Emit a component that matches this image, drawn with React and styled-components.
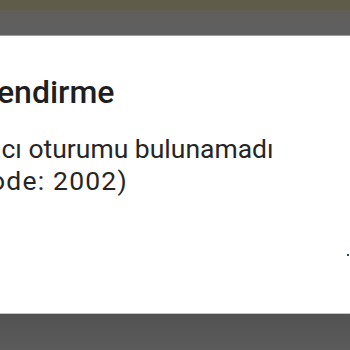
import React from "react"
import styled, { createGlobalStyle } from "styled-components"

const GlobalStyle = createGlobalStyle`
    html, body {
        margin: 0;
        padding: 0;
        background: #5f5f5f;
    }
    body {
        font-family: Roboto, "Noto Sans", sans-serif;
    }
`

const Screen = styled.div`
    display: flex;
    flex-direction: column;
    width: 350px;
    height: 350px;
    overflow: hidden;
`

const StatusBar = styled.div`
    height: 10px;
    background: #5f5d4a;
    flex-shrink: 0;
`

const Scrim = styled.div`
    height: 26px;
    background: linear-gradient(#5f5e57 0%, #5f5f5f 40%);
    flex-shrink: 0;
`

const Dialog = styled.div`
    position: relative;
    height: 277px;
    flex-shrink: 0;
    background: #ffffff;
    box-shadow: 0 -1px 0 #9a9a9a;
    margin-left: ${(p) => p.shift}px;
    padding: 36px 24px 0 0;
    box-sizing: border-box;
    display: flex;
    flex-direction: column;
    gap: 21px;
`

const Title = styled.h2`
    margin: 0 0 0 ${(p) => p.indent || 0}px;
    font: 500 32px/40px Roboto, sans-serif;
    color: #1f1f1f;
    white-space: nowrap;
`

const Message = styled.div`
    display: flex;
    flex-direction: column;
    font: 400 26.5px/32px Roboto, sans-serif;
    color: #262626;
`

const MessageLine = styled.span`
    margin-left: ${(p) => p.indent || 0}px;
    letter-spacing: ${(p) => p.spread || 0}px;
    white-space: nowrap;
`

const Dot = styled.span`
    position: absolute;
    right: ${(p) => p.right}px;
    top: ${(p) => p.top}px;
    width: 2px;
    height: 2px;
    background: #2f4a55;
`

const BottomScrim = styled.div`
    flex: 1;
    background: linear-gradient(#525252, #5b5b5b);
    border-top: 1px solid #c4c4c4;
`

export default function App() {
    return (
        <>
            <GlobalStyle />
            <Screen>
                <StatusBar />
                <Scrim />
                <Dialog shift={-78}>
                    <Title indent={4}>Bilgilendirme</Title>
                    <Message>
                        <MessageLine>Kullanıcı oturumu bulunamadı</MessageLine>
                        <MessageLine indent={-28} spread={1.2}>(Error code: 2002)</MessageLine>
                    </Message>
                    <Dot right={1} top={218} />
                </Dialog>
                <BottomScrim />
            </Screen>
        </>
    )
}
